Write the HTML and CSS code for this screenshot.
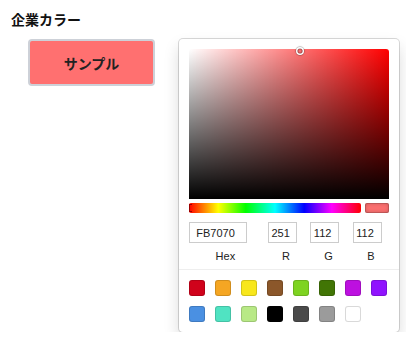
FILE: index.html
```html
<!DOCTYPE html>
<html lang="ja">
<head>
<meta charset="utf-8">
<link rel="stylesheet" href="styles.css">
</head>
<body>
<div class="page">
  <h2 class="title">企業カラー</h2>
  <div class="row">
    <button class="sample">サンプル</button>
    <div class="sketch">
      <div class="saturation">
        <div class="sat-white"></div>
        <div class="sat-black"></div>
        <div class="sat-cursor" style="left:55.4%;top:1.6%"></div>
      </div>
      <div class="controls">
        <div class="sliders">
          <div class="hue"><div class="hue-pointer"></div></div>
        </div>
        <div class="active-color"></div>
      </div>
      <div class="fields">
        <div class="field hex"><input class="input" value="FB7070"><span class="label">Hex</span></div>
        <div class="field"><input class="input" value="251"><span class="label">R</span></div>
        <div class="field"><input class="input" value="112"><span class="label">G</span></div>
        <div class="field"><input class="input" value="112"><span class="label">B</span></div>
      </div>
      <div class="presets">
        <div class="swatch" style="background:#D0021B"></div>
        <div class="swatch" style="background:#F5A623"></div>
        <div class="swatch" style="background:#F8E71C"></div>
        <div class="swatch" style="background:#8B572A"></div>
        <div class="swatch" style="background:#7ED321"></div>
        <div class="swatch" style="background:#417505"></div>
        <div class="swatch" style="background:#BD10E0"></div>
        <div class="swatch" style="background:#9013FE"></div>
        <div class="swatch" style="background:#4A90E2"></div>
        <div class="swatch" style="background:#50E3C2"></div>
        <div class="swatch" style="background:#B8E986"></div>
        <div class="swatch" style="background:#000000"></div>
        <div class="swatch" style="background:#4A4A4A"></div>
        <div class="swatch" style="background:#9B9B9B"></div>
        <div class="swatch" style="background:#FFFFFF"></div>
      </div>
    </div>
  </div>
</div>
</body>
</html>
```

FILE: styles.css
```css
* { box-sizing: border-box; }
body {
  margin: 0;
  background: #fff;
  font-family: "Liberation Sans", "Noto Sans CJK JP", sans-serif;
}
.page {
  padding: 9px 0 0 11px;
}
.title {
  margin: 0;
  font-family: "Noto Sans CJK JP", sans-serif;
  font-size: 14px;
  font-weight: 700;
  line-height: 20px;
  color: #111;
}
.row {
  display: flex;
  align-items: flex-start;
  margin-top: 10px;
  margin-left: 17px;
  gap: 24px;
}
.sample {
  width: 127px;
  height: 47px;
  margin: 0;
  padding: 0;
  background: #ff7070;
  border: 2px solid #cdd1d8;
  border-radius: 4px;
  font-family: "Noto Sans CJK JP", sans-serif;
  font-size: 14px;
  font-weight: 700;
  color: #222;
}
.sketch {
  width: 220px;
  padding: 10px 10px 0;
  background: #fff;
  border-radius: 4px;
  box-shadow: 0 0 0 1px rgba(0,0,0,.15), 0 8px 16px rgba(0,0,0,.15);
}
.saturation {
  position: relative;
  width: 200px;
  height: 150px;
  background: #f00;
  border-radius: 3px 3px 0 0;
}
.sat-white, .sat-black {
  position: absolute;
  inset: 0;
}
.sat-white { background: linear-gradient(to right, #fff, rgba(255,255,255,0)); }
.sat-black { background: linear-gradient(to top, #000, rgba(0,0,0,0)); }
.sat-cursor {
  position: absolute;
  width: 5px;
  height: 5px;
  border-radius: 50%;
  transform: translate(-2.5px, -2.5px);
  box-shadow: 0 0 0 1.5px #fff, inset 0 0 1px 1px rgba(0,0,0,.3), 0 0 1px 2px rgba(0,0,0,.4);
}
.controls {
  display: flex;
}
.sliders {
  flex: 1;
  padding: 4px 0;
}
.hue {
  position: relative;
  height: 10px;
  border-radius: 2px;
  background: linear-gradient(to right, #f00 0%, #ff0 17%, #0f0 33%, #0ff 50%, #00f 67%, #f0f 83%, #f00 100%);
}
.hue-pointer {
  position: absolute;
  left: 0;
  top: 1px;
  width: 3px;
  height: 8px;
  border: 1px solid #9a0000;
  border-right: none;
}
.active-color {
  width: 24px;
  height: 10px;
  margin: 4px 0 0 4px;
  border-radius: 2px;
  background: #fb7070;
  box-shadow: inset 0 0 0 1px rgba(0,0,0,.15), inset 0 0 4px rgba(0,0,0,.25);
}
.fields {
  display: flex;
  padding-top: 5px;
}
.field {
  flex: 1;
  padding-left: 6px;
  display: flex;
  flex-direction: column;
}
.field.hex {
  flex: 2;
  padding-left: 0;
}
.input {
  width: 80%;
  height: 21px;
  padding: 3px 10%;
  border: none;
  box-shadow: inset 0 0 0 1px #ccc;
  font-family: "Liberation Sans", sans-serif;
  font-size: 11px;
  line-height: 15px;
  color: #222;
  outline: none;
}
.label {
  display: block;
  text-align: center;
  font-size: 11px;
  line-height: 13px;
  color: #222;
  padding: 7px 0 6px;
}
.presets {
  display: flex;
  flex-wrap: wrap;
  margin: 0 -10px;
  padding: 10px 0 0 10px;
  border-top: 1px solid #eee;
}
.swatch {
  width: 16px;
  height: 16px;
  margin: 0 10px 10px 0;
  border-radius: 3px;
  box-shadow: inset 0 0 0 1px rgba(0,0,0,.15);
}
```
